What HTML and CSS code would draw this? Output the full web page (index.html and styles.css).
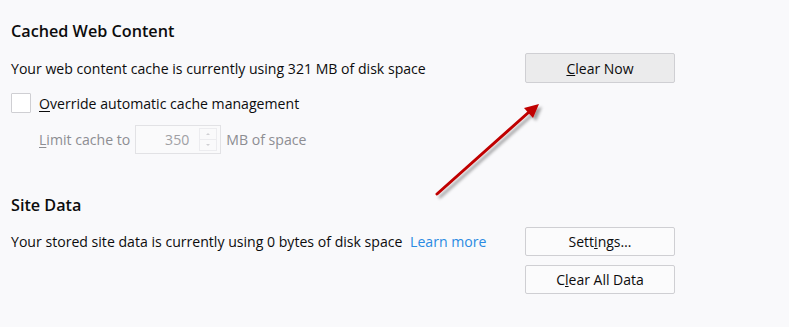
FILE: index.html
```html
<!DOCTYPE html>
<html lang="en">
<head>
    <meta charset="UTF-8">
    <title>Network &amp; Storage</title>
    <link rel="stylesheet" href="styles.css">
</head>
<body>

<div class="page">
    <!-- cached content -->
    <h2 class="section-title">Cached Web Content</h2>
    <div class="row">
        <span class="label">Your web content cache is currently using 321 MB of disk space</span>
        <div class="actions">
            <button class="btn btn-focus"><u>C</u>lear Now</button>
        </div>
    </div>
    <div class="check-row">
        <span class="checkbox"></span>
        <span class="label"><u>O</u>verride automatic cache management</span>
    </div>
    <div class="limit-row">
        <span class="label disabled"><u>L</u>imit cache to</span>
        <div class="number-box">
            <span class="number-value">350</span>
            <span class="spinner">
                <span class="spin-up"></span>
                <span class="spin-down"></span>
            </span>
        </div>
        <span class="label disabled">MB of space</span>
    </div>

    <!-- site data -->
    <h2 class="section-title site-title">Site Data</h2>
    <div class="row site-row">
        <span class="label">Your stored site data is currently using 0 bytes of disk space <a class="learn-more" href="#">Learn more</a></span>
        <div class="actions">
            <button class="btn">Sett<u>i</u>ngs…</button>
            <button class="btn">C<u>l</u>ear All Data</button>
        </div>
    </div>

    <!-- annotation arrow -->
    <svg class="arrow" width="789" height="327" viewBox="0 0 789 327">
        <defs>
            <filter id="shadow" x="-20%" y="-20%" width="140%" height="140%">
                <feDropShadow dx="3" dy="3" stdDeviation="1.5" flood-color="#000" flood-opacity="0.35"/>
            </filter>
        </defs>
        <g filter="url(#shadow)">
            <line x1="437" y1="194" x2="529" y2="112" stroke="#c00000" stroke-width="3" stroke-linecap="round"/>
            <polygon points="539,104 533,118 524,108" fill="#c00000"/>
        </g>
    </svg>
</div>

</body>
</html>
```

FILE: styles.css
```css
body {
    margin: 0;
    background-color: #f9f9fb;
    font-family: "Open Sans", "Noto Sans", sans-serif;
    font-size: 14.1px;
    color: #0c0c0d;
}
.page {
    position: relative;
    padding: 20px 114px 0 11px;
    height: 307px;
}
.section-title {
    margin: 0;
    font-size: 16.2px;
    font-weight: 600;
    line-height: 22px;
}
.row {
    display: grid;
    grid-template-columns: 1fr 150px;
    align-items: center;
    margin-top: 12px;
}
.label {
    white-space: nowrap;
}
.label u {
    text-underline-offset: 2px;
}
.disabled {
    color: #8d8d92;
}
.actions {
    display: flex;
    flex-direction: column;
    gap: 9px;
}
.btn {
    height: 30px;
    margin: 0;
    padding: 0;
    font-family: inherit;
    font-size: 14px;
    color: #0c0c0d;
    background-color: #fbfbfc;
    border: 1px solid #cfcfd3;
    border-radius: 2px;
}
.btn-focus {
    background-color: #ebebec;
    margin-top: -1px;
}
.check-row {
    display: flex;
    align-items: center;
    gap: 8px;
    margin-top: 10px;
    height: 20px;
}
.checkbox {
    width: 18px;
    height: 18px;
    border: 1px solid #cfcfd3;
    background-color: #fff;
    border-radius: 1px;
}
.limit-row {
    display: flex;
    align-items: center;
    margin-top: 12px;
    padding-left: 28px;
    height: 29px;
}
.number-box {
    display: flex;
    align-items: stretch;
    width: 84px;
    height: 27px;
    margin: 0 5px 0 5px;
    border: 1px solid #e2e2e5;
    background-color: #fafafb;
}
.number-value {
    flex: 1;
    text-align: right;
    padding-right: 10px;
    line-height: 27px;
    color: #a0a0a4;
}
.spinner {
    display: flex;
    flex-direction: column;
    width: 16px;
    margin: 2px 3px 2px 0;
    border: 1px solid #ececef;
}
.spin-up,
.spin-down {
    flex: 1;
    position: relative;
}
.spin-up {
    border-bottom: 1px solid #ececef;
}
.spin-up::after,
.spin-down::after {
    content: "";
    position: absolute;
    left: 6px;
    top: 4px;
    border-left: 2px solid transparent;
    border-right: 2px solid transparent;
}
.spin-up::after {
    border-bottom: 2px solid #d0d0d4;
}
.spin-down::after {
    border-top: 2px solid #d0d0d4;
}
.site-title {
    margin-top: 40px;
}
.site-row {
    align-items: start;
    margin-top: 11px;
}
.site-row .label {
    line-height: 29px;
}
.site-row .btn {
    height: 29px;
}
.learn-more {
    margin-left: 4px;
    color: #2a8ae2;
    text-decoration: none;
}
.arrow {
    position: absolute;
    left: 0;
    top: 0;
    pointer-events: none;
}
```
